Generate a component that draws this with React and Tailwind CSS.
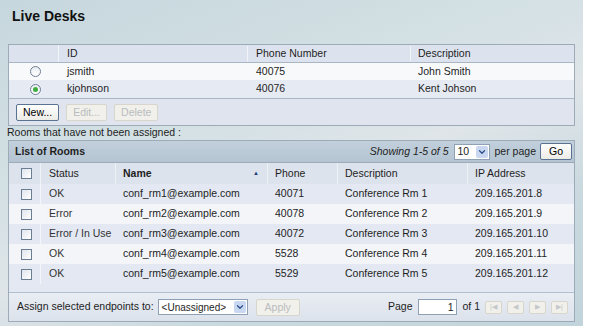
import { ChevronDown } from 'lucide-react'

const desks = [
  { id: 'jsmith', phone: '40075', desc: 'John Smith', checked: false },
  { id: 'kjohnson', phone: '40076', desc: 'Kent Johson', checked: true },
]

const rooms = [
  { status: 'OK', name: 'conf_rm1@example.com', phone: '40071', desc: 'Conference Rm 1', ip: '209.165.201.8' },
  { status: 'Error', name: 'conf_rm2@example.com', phone: '40078', desc: 'Conference Rm 2', ip: '209.165.201.9' },
  { status: 'Error / In Use', name: 'conf_rm3@example.com', phone: '40072', desc: 'Conference Rm 3', ip: '209.165.201.10' },
  { status: 'OK', name: 'conf_rm4@example.com', phone: '5528', desc: 'Conference Rm 4', ip: '209.165.201.11' },
  { status: 'OK', name: 'conf_rm5@example.com', phone: '5529', desc: 'Conference Rm 5', ip: '209.165.201.12' },
]

const deskCols = 'grid grid-cols-[50px_189px_163px_1fr]'
const roomCols = 'grid grid-cols-[32px_75px_152px_70px_130px_1fr]'

function Radio({ checked }) {
  return (
    <span className="flex h-[11px] w-[11px] items-center justify-center rounded-full border border-[#6f7f93] bg-gradient-to-b from-[#e9edf2] to-white">
      {checked && <span className="h-[5px] w-[5px] rounded-full bg-[#3fae3f]" />}
    </span>
  )
}

function Check() {
  return <span className="block h-[11px] w-[11px] border border-[#6b7d93] bg-gradient-to-br from-[#dfe5ec] to-white" />
}

function Btn({ children, disabled, className = '' }) {
  return (
    <button
      className={`h-[17px] rounded-[2px] border px-[6px] text-[10.5px] leading-none ${
        disabled
          ? 'border-[#d8d6cc] bg-[#f1f0ea] text-[#b9bcc0]'
          : 'border-[#5a7393] bg-gradient-to-b from-white to-[#ecebe6] text-black'
      } ${className}`}
    >
      {children}
    </button>
  )
}

function NavBtn({ children }) {
  return (
    <span className="flex h-[13px] w-[17px] items-center justify-center rounded-[2px] border border-[#d8d6cc] bg-[#f1f0ea] text-[7px] text-[#c4c7cb]">
      {children}
    </span>
  )
}

export default function App() {
  return (
    <div className="flex h-[330px] w-[607px] bg-white font-['Liberation_Sans',Arial,sans-serif] text-[10.5px] text-[#1e1e1e]">
      <div className="h-[326px] w-[583px] bg-[linear-gradient(160deg,#c6d7dd_0%,#d3e0e4_35%,#dfe5e9_55%,#c9d9df_75%,#c2d4db_100%)] pt-[8px]">
        <h1 className="px-[12px] text-[14px] font-bold leading-[17px] text-[#111]">Live Desks</h1>

        <div className="mx-[8px] mt-[19px] border border-[#9daab8] bg-[#dfe4ee]">
          <div className={`${deskCols} h-[17px] items-center bg-[#dde3ee]`}>
            <span className="h-full border-r border-[#f2f4f8]" />
            <span className="border-r border-[#f2f4f8] pl-[8px]">ID</span>
            <span className="border-r border-[#f2f4f8] pl-[8px]">Phone Number</span>
            <span className="pl-[7px]">Description</span>
          </div>
          {desks.map((d, i) => (
            <div
              key={d.id}
              className={`${deskCols} h-[18px] items-center ${i === 0 ? 'border-t border-[#aab6c3] bg-[#f8f9fb]' : 'bg-[#e6eaf2]'}`}
            >
              <span className="flex pl-[21px]">
                <Radio checked={d.checked} />
              </span>
              <span className="pl-[8px]">{d.id}</span>
              <span className="pl-[8px]">{d.phone}</span>
              <span className="pl-[7px]">{d.desc}</span>
            </div>
          ))}
          <div className="flex h-[27px] items-center gap-[7px] border-t border-[#aab6c3] pl-[7px]">
            <Btn>New...</Btn>
            <Btn disabled>Edit...</Btn>
            <Btn disabled>Delete</Btn>
          </div>
        </div>

        <p className="px-[7px] leading-[13px]">Rooms that have not been assigned :</p>

        <div className="mx-[8px] mt-[1px] border border-[#9daab8] bg-[#e3e8f0]">
          <div className="flex h-[21px] items-center bg-gradient-to-b from-[#c2d0dc] to-[#b4c4d2] pl-[6px] pr-[2px]">
            <span className="font-bold">List of Rooms</span>
            <span className="ml-auto italic">Showing 1-5 of 5</span>
            <span className="ml-[5px] flex h-[16px] w-[36px] items-center justify-between border border-[#8ea0b4] bg-white pl-[3px] pr-[1px]">
              10
              <span className="flex h-[12px] w-[12px] items-center justify-center rounded-[2px] bg-[#c9d8f0]">
                <ChevronDown className="h-[10px] w-[10px] text-[#2c4f8c]" strokeWidth={3} />
              </span>
            </span>
            <span className="ml-[5px]">per page</span>
            <Btn className="ml-[4px] px-[8px]">Go</Btn>
          </div>

          <div className={`${roomCols} h-[22px] items-center border-t border-[#9daab8] bg-[#dde3ec]`}>
            <span className="flex h-full items-center border-r border-[#eef1f6] pl-[12px]">
              <Check />
            </span>
            <span className="flex h-full items-center border-r border-[#eef1f6] pl-[8px]">Status</span>
            <span className="flex h-full items-center justify-between border-r border-[#eef1f6] pl-[7px] pr-[8px] font-bold">
              Name
              <span className="text-[6px] text-[#1d3c78]">▲</span>
            </span>
            <span className="flex h-full items-center border-r border-[#eef1f6] pl-[7px]">Phone</span>
            <span className="flex h-full items-center border-r border-[#eef1f6] pl-[7px]">Description</span>
            <span className="pl-[7px]">IP Address</span>
          </div>

          {rooms.map((r, i) => (
            <div
              key={r.name}
              className={`${roomCols} h-[20px] items-center ${i % 2 === 0 ? 'bg-[#e3e8f2]' : 'bg-[#f3f5f9]'}`}
            >
              <span className="flex h-full items-center border-r border-[#f4f6fa] pl-[12px]">
                <Check />
              </span>
              <span className="pl-[8px] text-[#333]">{r.status}</span>
              <span className="pl-[7px]">{r.name}</span>
              <span className="pl-[7px]">{r.phone}</span>
              <span className="pl-[7px]">{r.desc}</span>
              <span className="pl-[7px]">{r.ip}</span>
            </div>
          ))}
          <div className="h-[8px] bg-[#e3e8f2]" />

          <div className="flex h-[29px] items-center border-t border-[#b3bfcc] bg-gradient-to-b from-[#e9edf4] to-[#dce2eb] pl-[8px] pr-[6px]">
            <span>Assign selected endpoints to:</span>
            <span className="ml-[4px] flex h-[16px] w-[90px] items-center justify-between border border-[#8ea0b4] bg-white pl-[3px] pr-[1px] text-[10px]">
              &lt;Unassigned&gt;
              <span className="flex h-[12px] w-[12px] items-center justify-center rounded-[2px] bg-[#c9d8f0]">
                <ChevronDown className="h-[10px] w-[10px] text-[#2c4f8c]" strokeWidth={3} />
              </span>
            </span>
            <Btn disabled className="ml-[8px] px-[8px]">Apply</Btn>
            <span className="ml-auto">Page</span>
            <span className="ml-[6px] h-[16px] w-[39px] border border-[#8ea0b4] bg-white pr-[3px] text-right leading-[14px]">1</span>
            <span className="ml-[5px]">of 1</span>
            <span className="ml-[5px] flex gap-[5px]">
              <NavBtn>|◀</NavBtn>
              <NavBtn>◀</NavBtn>
              <NavBtn>▶</NavBtn>
              <NavBtn>▶|</NavBtn>
            </span>
          </div>
        </div>
      </div>
    </div>
  )
}
